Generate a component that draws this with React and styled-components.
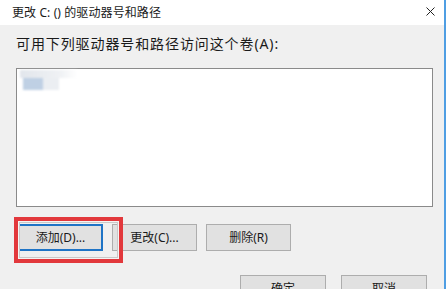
import React from "react";
import styled, { createGlobalStyle } from "styled-components";

const GlobalStyle = createGlobalStyle`
  html, body { margin: 0; padding: 0; background: #ffffff; }
  body { font-family: "Noto Sans", "Noto Sans CJK SC", sans-serif; }
  * { box-sizing: border-box; }
`;

const Window = styled.div`
  position: relative;
  width: 446px;
  height: 289px;
  overflow: hidden;
  display: flex;
  flex-direction: column;
  border-right: 2px solid #4f9ee3;
  background: #f0f0f0;
`;

const TitleBar = styled.div`
  height: 25px;
  flex: none;
  background: #ffffff;
  display: flex;
  align-items: center;
  justify-content: space-between;
  padding: 0 9px 0 12px;
`;

const Title = styled.span`
  font-size: 12px;
  color: #1a1a1a;
  line-height: 16px;
  letter-spacing: 0.1px;
`;

const CloseIcon = styled.svg`
  width: 9px;
  height: 9px;
  margin-top: -2px;
`;

const Body = styled.div`
  flex: 1;
  display: flex;
  flex-direction: column;
  padding: 10px 11px 0 16px;
`;

const Label = styled.div`
  font-size: 14px;
  line-height: 18px;
  color: #1a1a1a;
  letter-spacing: 0.9px;
`;

const ListBox = styled.div`
  margin-top: 15px;
  width: 417px;
  height: 139px;
  background: #ffffff;
  border: 1px solid #8a8a8a;
  padding: 1px 0 0 3px;
`;

const BlurItem = styled.div`
  width: 60px;
  filter: blur(1px);
  display: flex;
  flex-direction: column;
`;

const BlurBand = styled.div`
  height: 8px;
  width: 57px;
  background: linear-gradient(to right, #e2e6ec, #eff1f4 70%, #ffffff);
`;

const BlurBlock = styled.div`
  display: flex;
  height: 12px;
`;

const BlurBlue = styled.div`
  width: 20px;
  margin-left: 3px;
  background: #bfd0e4;
`;

const BlurGrey = styled.div`
  width: 16px;
  background: #ebeef2;
`;

const ButtonRow = styled.div`
  margin-top: 17px;
  margin-left: 2px;
  display: flex;
  gap: 9px;
`;

const BottomRow = styled.div`
  margin-top: 24px;
  margin-right: 6px;
  display: flex;
  justify-content: flex-end;
  gap: 15px;
`;

const Button = styled.div`
  width: ${(p) => p.$w || 85}px;
  height: 27px;
  flex: none;
  display: flex;
  align-items: center;
  justify-content: center;
  background: #e1e1e1;
  border: ${(p) => (p.$focused ? "2px solid #1f74c6" : "1px solid #adadad")};
  font-size: 12px;
  color: #1a1a1a;
  padding-bottom: 1px;
`;

const Annotation = styled.div`
  position: absolute;
  left: 14px;
  top: 217px;
  width: 109px;
  height: 46px;
  border: 4px solid #e2383c;
  box-shadow: inset 0 0 0 1px #f4f4f4, inset 0 0 0 2px #c9c9c9;
  pointer-events: none;
`;

export default function App() {
  return (
    <>
      <GlobalStyle />
      <Window>
        <TitleBar>
          <Title>更改 C: () 的驱动器号和路径</Title>
          <CloseIcon viewBox="0 0 9 9">
            <path d="M0.5 0.5 L8.5 8.5 M8.5 0.5 L0.5 8.5" stroke="#222" strokeWidth="1" fill="none" />
          </CloseIcon>
        </TitleBar>
        <Body>
          <Label>可用下列驱动器号和路径访问这个卷(A):</Label>
          <ListBox>
            <BlurItem>
              <BlurBand />
              <BlurBlock>
                <BlurBlue />
                <BlurGrey />
              </BlurBlock>
            </BlurItem>
          </ListBox>
          <ButtonRow>
            <Button $focused>添加(D)...</Button>
            <Button>更改(C)...</Button>
            <Button>删除(R)</Button>
          </ButtonRow>
          <BottomRow>
            <Button $w={86}>确定</Button>
            <Button $w={86}>取消</Button>
          </BottomRow>
        </Body>
        <Annotation />
      </Window>
    </>
  );
}
